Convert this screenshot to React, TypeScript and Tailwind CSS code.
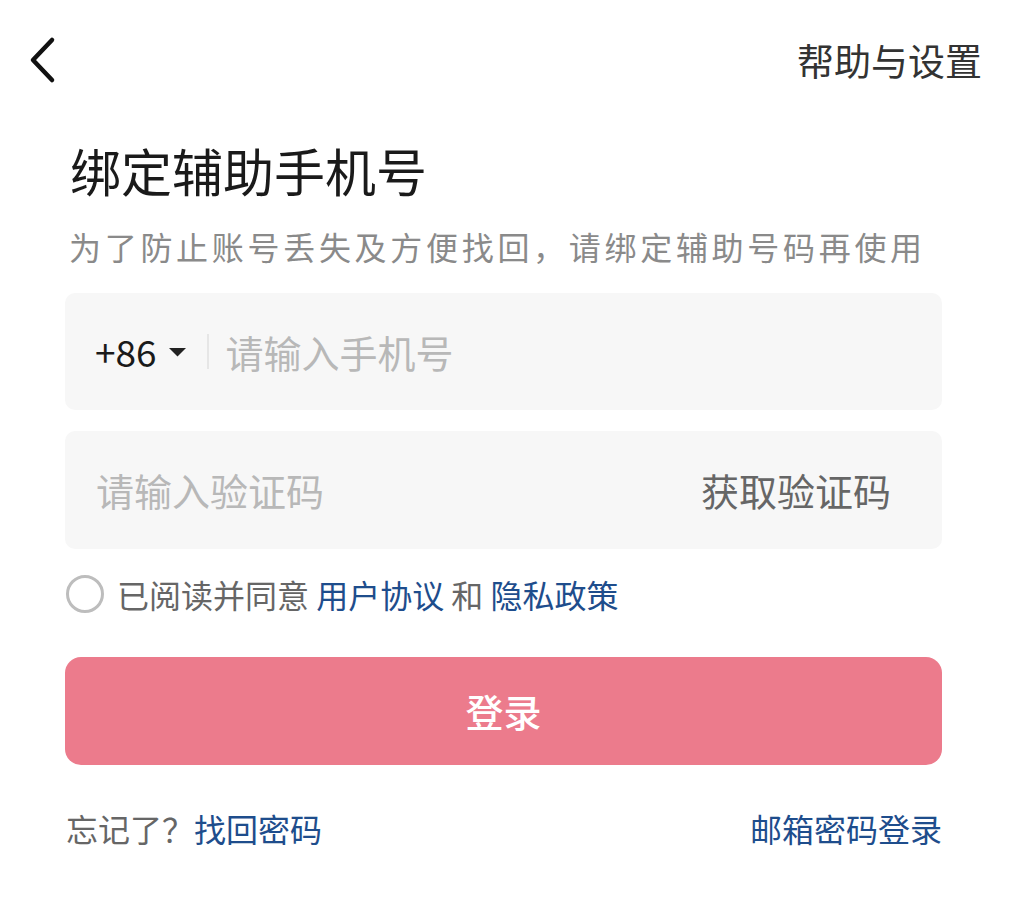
import React, { useState } from 'react';

const cjk = { fontFamily: '"Noto Sans CJK SC", "Noto Sans", sans-serif' };

const BackIcon: React.FC = () => (
  <svg width="34" height="50" viewBox="0 0 34 50" fill="none">
    <path d="M28 5 L9 25 L28 45" stroke="#111" strokeWidth="4.5" strokeLinecap="round" strokeLinejoin="round" />
  </svg>
);

const App: React.FC = () => {
  const [agreed, setAgreed] = useState(false);

  return (
    <div className="w-[1017px] min-h-[922px] bg-white" style={cjk}>
      {/* header */}
      <div className="h-[120px] flex items-center justify-between pl-[24px] pr-[35px]">
        <button className="flex items-center">
          <BackIcon />
        </button>
        <span className="text-[37px] leading-none text-[#333]">帮助与设置</span>
      </div>

      <div className="pl-[65px] pr-[75px]">
        <h1 className="mt-[20px] pl-[5px] text-[51px] leading-[60px] font-normal text-[#1a1a1a]">绑定辅助手机号</h1>
        <p className="mt-[26px] pl-[4px] text-[32px] leading-[40px] tracking-[3.7px] text-[#8a8a8a] whitespace-nowrap">
          为了防止账号丢失及方便找回，请绑定辅助号码再使用
        </p>

        {/* phone */}
        <div className="mt-[27px] h-[117px] rounded-[10px] bg-[#f7f7f7] flex items-center pl-[30px]">
          <span className="text-[37px] leading-none text-[#1a1a1a]">+86</span>
          <svg className="ml-[11px]" width="19" height="10" viewBox="0 0 19 10">
            <path d="M1 1 H18 L9.5 9.5 Z" fill="#222" strokeLinejoin="round" />
          </svg>
          <div className="ml-[20px] w-[2px] h-[35px] bg-[#e6e6e6]" />
          <span className="ml-[17px] text-[38px] leading-none text-[#b8b8b8]">请输入手机号</span>
        </div>

        {/* code */}
        <div className="mt-[21px] h-[118px] rounded-[10px] bg-[#f7f7f7] flex items-center justify-between pl-[31px] pr-[51px]">
          <span className="text-[38px] leading-none text-[#b8b8b8]">请输入验证码</span>
          <span className="text-[38px] leading-none text-[#666]">获取验证码</span>
        </div>

        {/* agreement */}
        <div className="mt-[23px] h-[44px] flex items-center">
          <button
            onClick={() => setAgreed(!agreed)}
            className={`w-[38px] h-[38px] rounded-full border-[3px] ml-[1px] ${agreed ? 'border-[#ec7b8c] bg-[#ec7b8c]' : 'border-[#bdbdbd] bg-white'}`}
          />
          <span className="ml-[13px] text-[32px] leading-none text-[#666] whitespace-nowrap">
            已阅读并同意 <span className="text-[#1e4d8c]">用户协议</span> 和 <span className="text-[#1e4d8c]">隐私政策</span>
          </span>
        </div>

        {/* login */}
        <button className="mt-[41px] w-full h-[108px] rounded-[16px] bg-[#ec7b8c] flex items-center justify-center">
          <span className="text-[38px] leading-none font-medium text-white">登录</span>
        </button>

        {/* bottom links */}
        <div className="mt-[41px] h-[44px] flex items-center justify-between">
          <span className="pl-[1px] text-[32px] leading-none text-[#666]">
            忘记了？<span className="text-[#1e4d8c]">找回密码</span>
          </span>
          <span className="text-[32px] leading-none text-[#1e4d8c]">邮箱密码登录</span>
        </div>
      </div>
    </div>
  );
};

export default App;
